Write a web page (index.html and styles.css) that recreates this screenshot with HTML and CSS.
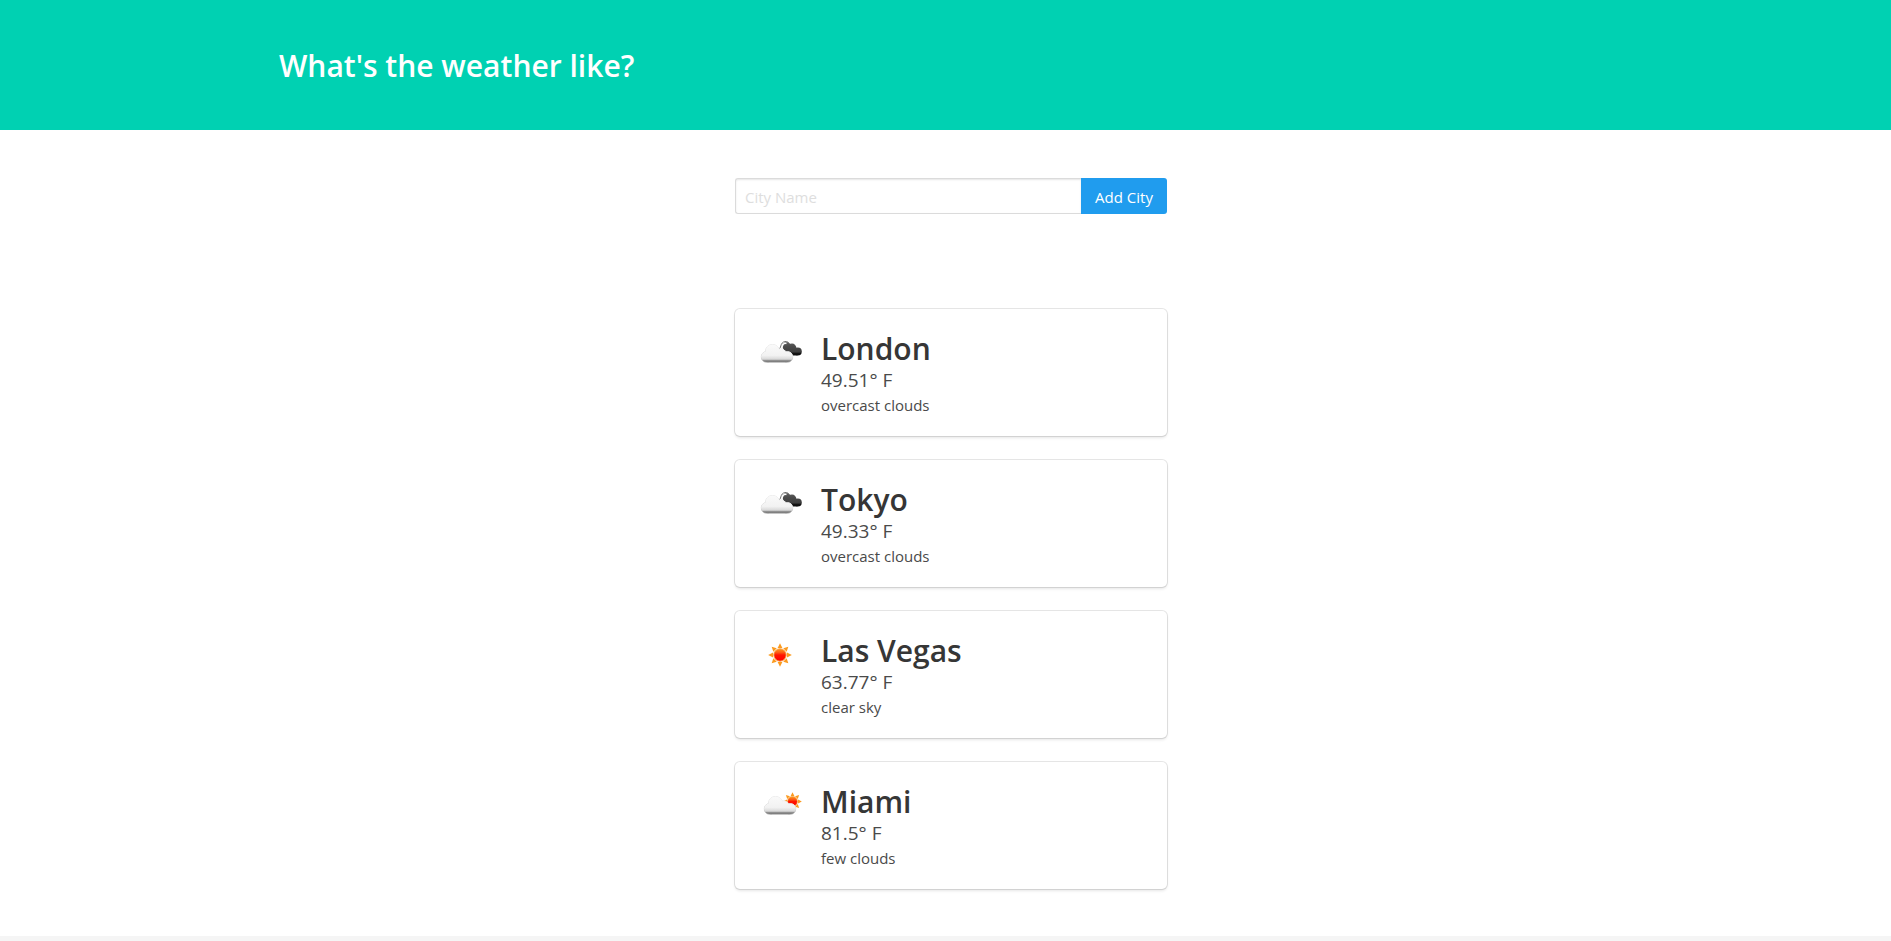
FILE: index.html
```html
<!DOCTYPE html>
<html lang="en">
<head>
<meta charset="utf-8">
<title>What's the weather like?</title>
<link rel="stylesheet" href="styles.css">
</head>
<body>
<svg class="defs" aria-hidden="true">
  <defs>
    <linearGradient id="light" gradientUnits="userSpaceOnUse" x1="0" y1="0" x2="0" y2="19">
      <stop offset="0" stop-color="#fafafa"/>
      <stop offset=".6" stop-color="#f2f2f2"/>
      <stop offset=".8" stop-color="#d8d8d8"/>
      <stop offset=".88" stop-color="#858585"/>
      <stop offset="1" stop-color="#757575"/>
    </linearGradient>
    <linearGradient id="rim" gradientUnits="userSpaceOnUse" x1="0" y1="0" x2="0" y2="19">
      <stop offset="0" stop-color="#e6e6e6"/>
      <stop offset=".7" stop-color="#d0d0d0"/>
      <stop offset="1" stop-color="#999"/>
    </linearGradient>
    <linearGradient id="dark" gradientUnits="userSpaceOnUse" x1="0" y1="13" x2="0" y2="27">
      <stop offset="0" stop-color="#606060"/>
      <stop offset=".3" stop-color="#4c4c4c"/>
      <stop offset=".7" stop-color="#3e3e3e"/>
      <stop offset=".85" stop-color="#080808"/>
      <stop offset="1" stop-color="#222"/>
    </linearGradient>
    <linearGradient id="core" x1="0" y1="0" x2="0" y2="1">
      <stop offset="0" stop-color="#ff9a1c"/>
      <stop offset=".3" stop-color="#fb5a14"/>
      <stop offset=".5" stop-color="#ff1500"/>
      <stop offset="1" stop-color="#f00"/>
    </linearGradient>
    <symbol id="sun" viewBox="-12 -12 24 24">
      <g fill="#fb9a1e">
        <path id="ray" d="M0-11.800L2.400-7H-2.400z"/>
        <use href="#ray" transform="rotate(45)"/>
        <use href="#ray" transform="rotate(90)"/>
        <use href="#ray" transform="rotate(135)"/>
        <use href="#ray" transform="rotate(180)"/>
        <use href="#ray" transform="rotate(225)"/>
        <use href="#ray" transform="rotate(270)"/>
        <use href="#ray" transform="rotate(315)"/>
      </g>
      <circle r="6.200" fill="url(#core)" stroke="#f9a545" stroke-width="1"/>
    </symbol>
    <g id="puffs">
      <circle cx="12" cy="7.500" r="7"/>
      <circle cx="6" cy="12.800" r="5.300"/>
      <circle cx="20.500" cy="10" r="5"/>
      <circle cx="27" cy="12.800" r="5.300"/>
      <rect x="5.500" y="8" width="22" height="10.100" rx="2"/>
    </g>
    <symbol id="cloud" viewBox="0 0 33 19">
      <use href="#puffs" fill="none" stroke="url(#rim)" stroke-width="1"/>
      <use href="#puffs" fill="url(#light)"/>
    </symbol>
    <symbol id="overcast" viewBox="0 1 50 50">
      <g fill="url(#dark)">
        <circle cx="31.500" cy="17.200" r="4.200"/>
        <circle cx="37" cy="19" r="4.400"/>
        <circle cx="42.800" cy="22.600" r="4"/>
        <path d="M27.500 17l6-2 9 4.500v7h-7.500q-2-.5-3-2.500z"/>
      </g>
      <path fill="none" stroke="#fff" stroke-width="1.500" d="M26.500 20c.5-1.500.5-3 1.500-4.500 1-1.200 2.500-1.500 3.500-1"/>
      <path fill="none" stroke="#707070" stroke-width="1" d="M24.500 19.500c1-.5 1-2 1.800-4 .9-2.200 3-3.300 5-3 1.200.2 2 .8 2.500 1.500"/>
      <use href="#cloud" x="5.500" y="15" width="33" height="19"/>
    </symbol>
    <symbol id="few" viewBox="0 1 50 50">
      <use href="#sun" x="28" y="10" width="19" height="19"/>
      <use href="#cloud" x="8.500" y="14" width="33" height="19"/>
    </symbol>
    <symbol id="clear" viewBox="0 1 50 50">
      <use href="#sun" x="13" y="12" width="24" height="24"/>
    </symbol>
  </defs>
</svg>
<header class="hero">
  <div class="container"><h1 class="title">What's the weather like?</h1></div>
</header>
<section class="section">
  <form class="column add-city">
    <input class="input" type="text" placeholder="City Name" aria-label="City Name">
    <button class="button" type="submit">Add City</button>
  </form>
</section>
<section class="section">
  <div class="column cards">
    <article class="box">
      <svg class="icon" role="img" aria-label="overcast clouds"><use href="#overcast"/></svg>
      <div class="content"><h2 class="title">London</h2><p class="temp">49.51° F</p><p class="desc">overcast clouds</p></div>
    </article>
    <article class="box">
      <svg class="icon" role="img" aria-label="overcast clouds"><use href="#overcast"/></svg>
      <div class="content"><h2 class="title">Tokyo</h2><p class="temp">49.33° F</p><p class="desc">overcast clouds</p></div>
    </article>
    <article class="box">
      <svg class="icon" role="img" aria-label="clear sky"><use href="#clear"/></svg>
      <div class="content"><h2 class="title">Las Vegas</h2><p class="temp">63.77° F</p><p class="desc">clear sky</p></div>
    </article>
    <article class="box">
      <svg class="icon" role="img" aria-label="few clouds"><use href="#few"/></svg>
      <div class="content"><h2 class="title">Miami</h2><p class="temp">81.5° F</p><p class="desc">few clouds</p></div>
    </article>
  </div>
</section>
<footer class="footer"></footer>
</body>
</html>
```

FILE: styles.css
```css
* {
  box-sizing: border-box;
  margin: 0;
}

body {
  display: flex;
  flex-direction: column;
  min-height: 100vh;
  background: #fff;
  color: #4a4a4a;
  font-family: "Open Sans", "Noto Sans", sans-serif;
  font-size: 15px;
  line-height: 24px;
}

.defs {
  position: absolute;
  width: 0;
  height: 0;
}

.hero {
  padding: 48px 24px 46px 35px;
  background: #00d1b2;
}

.container {
  max-width: 1344px;
  margin: 0 auto;
}

.title {
  color: #363636;
  font-size: 30px;
  font-weight: 600;
  line-height: 36px;
}

.hero .title {
  color: #fff;
}

.section {
  padding: 48px 24px 47px 35px;
}

.column {
  max-width: 432px;
  margin: 0 auto;
}

.add-city {
  display: flex;
}

.input,
.button {
  height: 36px;
  font: inherit;
}

.input {
  flex: 1;
  min-width: 0;
  padding: 2px 9px 0;
  border: 1px solid #dbdbdb;
  border-right: 0;
  border-radius: 3px 0 0 3px;
  background: #fff;
  box-shadow: inset 0 1px 2px rgba(10, 10, 10, .1);
  color: #363636;
}

.input::placeholder {
  color: #dedede;
  opacity: 1;
}

.button {
  width: 86px;
  padding: 2px 0 0;
  border: 0;
  border-radius: 0 3px 3px 0;
  background: #209cee;
  color: #fff;
  white-space: nowrap;
}

.cards {
  display: grid;
  gap: 24px;
}

.box {
  display: flex;
  gap: 16px;
  padding: 21px 20px 19px;
  border-radius: 5px;
  background: #fff;
  box-shadow: 0 2px 3px rgba(10, 10, 10, .1), 0 0 0 1px rgba(10, 10, 10, .1);
}

.icon {
  flex: none;
  width: 50px;
  height: 50px;
}

.content .title {
  line-height: 37px;
}

.temp {
  font-size: 19px;
  line-height: 26px;
}

.footer {
  flex: 1;
  background: #f5f5f5;
}
```
